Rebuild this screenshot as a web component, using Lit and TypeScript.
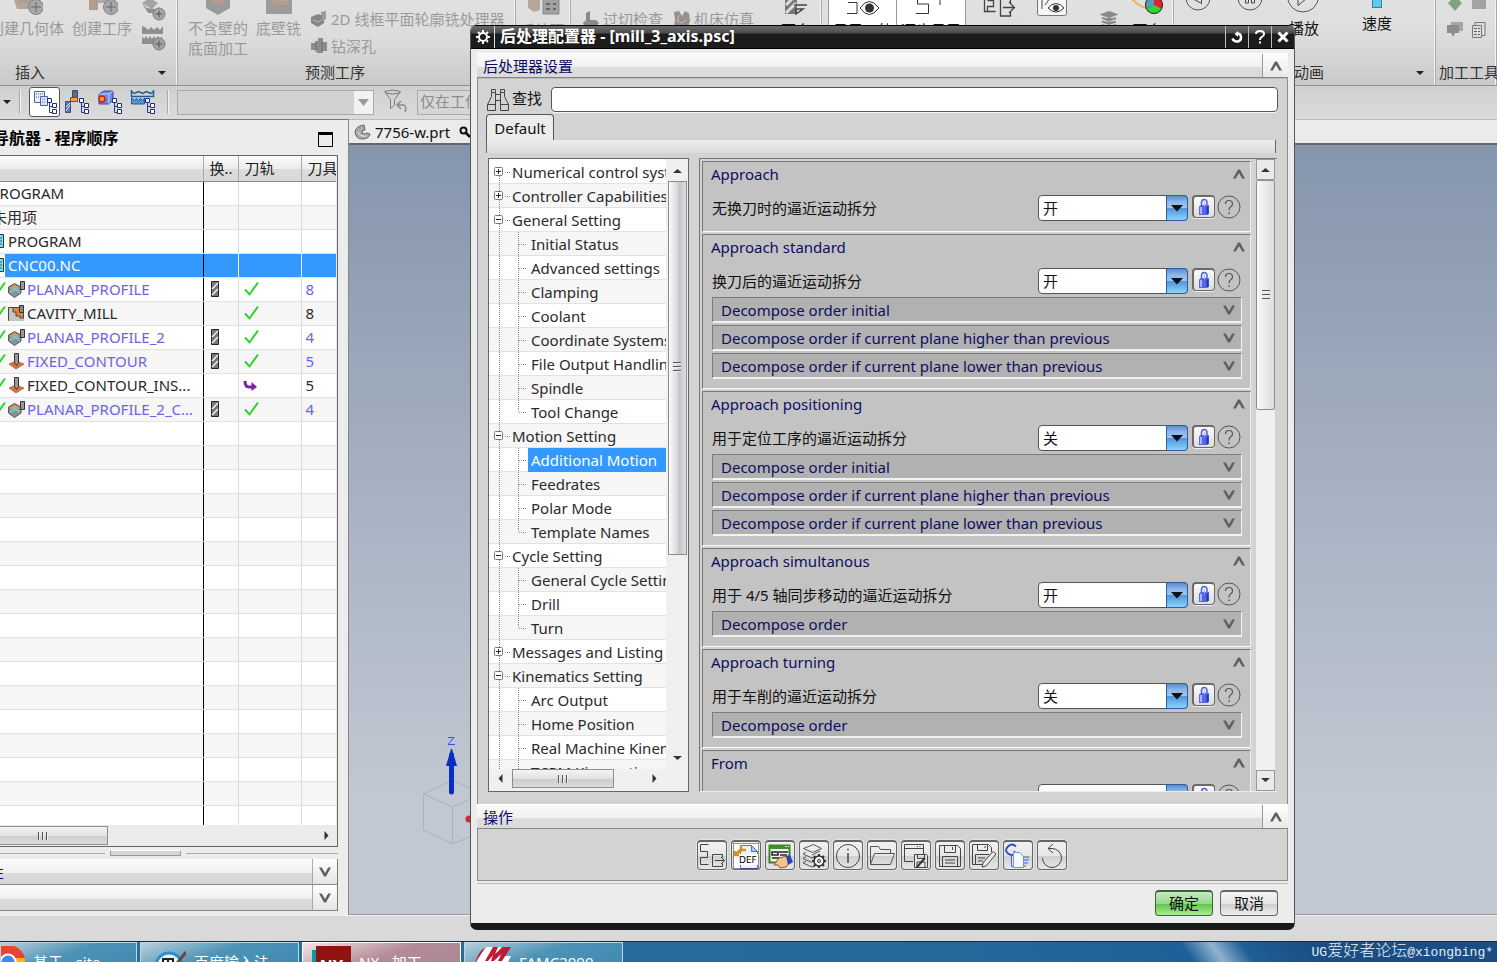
import { LitElement, html, svg, css, nothing } from "lit";
import { customElement } from "lit/decorators.js";
import { classMap } from "lit/directives/class-map.js";

/* ---------- icons ---------- */
const icon = (w: number, h: number, body: unknown, cls = "") =>
  html`<svg class=${cls} width=${w} height=${h} viewBox="0 0 ${w} ${h}" fill="none" aria-hidden="true">${body}</svg>`;

const chevUp = () => icon(12, 10, svg`<path d="M0 9.5 5 .5h2l5 9H9.200L6 4 2.800 9.500z" fill="#606060"/>`);
const chevDown = () => icon(12, 10, svg`<path d="M0 .5 5 9.500h2l5-9H9.200L6 6 2.800.5z" fill="#606060"/>`);
const caret = () => icon(8, 4, svg`<path d="M0 0h8L4 4z" fill="#222"/>`);
const tri = (dir: string) => {
  const d: Record<string, string> = {
    up: "M1 8 5.500 4 10 8z",
    down: "M1 3h9L5.500 7z",
    left: "M7.500 1v9L3.500 5.500z",
    right: "M3.500 1v9l4-4.500z",
  };
  return icon(11, 11, svg`<path d=${d[dir]} fill="#333"/>`);
};

const plusBadge = svg`<circle cx="25" cy="24" r="7.500" fill="#a8a8a8" stroke="#808080"/><path d="M25 19v10M20 24h10" stroke="#666"/>`;
const geomIcon = () => icon(32, 32, svg`<path d="M2 14h18l4 6-8 6H6z" fill="#b9a596"/><path d="M4 8h16v12H8z" fill="#a9a09a"/>${plusBadge}`);
const operIcon = () => icon(32, 32, svg`<path d="M3 10h9v17H3z" fill="#b29c8b"/><path d="M12 12h10v8H12z" fill="#aaa"/>${plusBadge}`);
const smallPlus = () => icon(26, 26, svg`<path d="M2 8l8-5 8 5-6 6z" fill="#a3a3a3"/><path d="M2 8l5 5 8 1v4H8z" fill="#909090"/><circle cx="19" cy="19" r="6" fill="#a8a8a8" stroke="#777"/><path d="M19 15.500v7M15.500 19h7" stroke="#555"/>`);
const methodPlus = () => icon(26, 26, svg`<path d="M2 1v8h21V1l-3 4-3-3-3 3-3-3-3 3-3-3z" fill="#8f8f8f"/><path d="M2 11v8h20v-8l-2 3-2-3-2 3-2-3-2 3-2-3-2 3-2-3-2 3z" fill="#8f8f8f"/><circle cx="19" cy="19" r="6" fill="#a2a2a2" stroke="#777"/><path d="M19 15.500v7M15.500 19h7" stroke="#555"/>`);
const floorIcon = () => icon(32, 32, svg`<path d="M4 10l12-5 12 5v15l-12 7-12-7z" fill="#9a9a9a"/><path d="M4 10l12 6 12-6v4l-12 6-12-6z" fill="#8fa8ab"/><path d="M8 18l8 4 8-4-8-5z" fill="#b59c8e"/>`);
const wallIcon = () => icon(32, 32, svg`<path d="M3 4h26v27H3z" fill="#9c9c9c"/><path d="M9 4h17v18H9z" fill="#b99b8c"/><path d="M12 4h14v14H12z" fill="#a8a8a8"/>`);
const profileIcon = () => icon(18, 18, svg`<path d="M1 7l7-3 6 2v7l-6 4-7-4z" fill="#858585"/><path d="M11 2l5-1v8l-4 2z" fill="#9b9b9b"/><path d="M3 10l5 2 4-2" stroke="#b7b7b7"/>`);
const drillIcon = () => icon(18, 18, svg`<path d="M1 6h4V4h3V1h5v4h4v9h-4v2H7v-3H1z" fill="#8c8c8c"/><path d="M6 6v9M12 4v10" stroke="#6f6f6f"/>`);
const postIcon = () => icon(34, 32, svg`<path d="M2 8h12v19l-6 2-6-4z" fill="#b7a79a"/><path d="M17 12h16v19H17z" fill="#a1a1a1" stroke="#888"/><path d="M20 16h4M27 16h3M20 21h4M27 21h3M20 26h4M27 26h3" stroke="#666" stroke-width="2"/>`);
const gougeIcon = () => icon(18, 18, svg`<path d="M4 3l4-2v9h6l3 3-3 4H3l-2-4 3-3z" fill="#8d8888"/><path d="M4 11l5 3" stroke="#b58c80"/>`);
const machineIcon = () => icon(18, 18, svg`<path d="M1 2l5-1 3 5 3-5 4 2 1 8-2 6-5-2-4 1-5 1 1-7z" fill="#97908c"/><path d="M6 5l-2 6 5 2 4-3" stroke="#c9beb8"/>`);
const endMillIcon = () => icon(24, 32, svg`<path d="M1 5h12v26H1z" fill="#777"/><path d="M2 30l10-10M2 22l10-10" stroke="#ddd" stroke-width="3"/><path d="M10 22h13M12 26h7l-7 5z" stroke="#444" stroke-width="1.500"/>`);
const pathEye = () => icon(34, 32, svg`<path d="M1 13h3M2 19.500h9v11M1 30.500h10" stroke="#333"/><path d="M14 25q9-13 19 0-10 13-19 0z" fill="#fff" stroke="#333"/><circle cx="23.500" cy="25" r="4.500" fill="#333"/>`);
const pathStep = () => icon(34, 32, svg`<path d="M14 12H3.500v9h11v9.500H2M26 17v5" stroke="#333"/>`);
const pathOut = () => icon(34, 34, svg`<path d="M14 8H2.500v20.500h11M5.500 17.500h6v6h-6v5h8M18.500 20v-4h10v4M18.500 16v17h10v-5M21 24.500h11M27 19l5.500 5.500L27 30" stroke="#444" stroke-width="1.300"/>`);
const checkEye = () => icon(30, 34, svg`<rect x=".5" y="1.500" width="29" height="31" rx="2" fill="#f6f6f6" stroke="#777"/><path d="M5 26V12l8-3M8 22l8-11M12 17l8-7" stroke="#444"/><path d="M11 25q8-9 16 0-8 8-16 0z" fill="#fff" stroke="#333"/><circle cx="19" cy="25" r="3" fill="#333"/>`);
const stackIcon = () => icon(18, 18, svg`<path d="M9 2l7 2.500-7 2.500-7-2.500zM2 8l7 2.500L16 8M2 11.500l7 2.500 7-2.500M2 15l7 2.500 7-2.500" fill="#8b8b8b" stroke="#8b8b8b" stroke-width="2"/>`);
const wheelIcon = () => icon(34, 32, svg`<path d="M1 16q8 8 14 9" stroke="#e9b64b" stroke-width="2"/><circle cx="23" cy="22" r="9" fill="#e3202c"/><path d="M23 22V13a9 9 0 0 0-8 13z" fill="#47a4b5"/><path d="M23 22l-8 4a9 9 0 0 0 16 0z" fill="#2fd43a"/><circle cx="23" cy="22" r="8.500" stroke="#333"/>`);
const playback = (kind: string) => icon(34, 36, svg`
  ${kind === "play"
    ? svg`<circle cx="16" cy="16.500" r="15.500" stroke="#555"/><path d="M11 9l11 7.500-11 9z" stroke="#444"/>`
    : svg`<circle cx="15" cy="18" r="12" stroke="#555"/>`}
  ${kind === "back" ? svg`<path d="M18.500 12l-9 6.500 9 5z" stroke="#444"/>` : nothing}
  ${kind === "pause" ? svg`<path d="M10.500 13h3v10h-3zM16.500 13h3v10h-3z" stroke="#444"/>` : nothing}`);
const diamondIcon = () => icon(18, 18, svg`<path d="M9 2l7 7-7 8-7-8z" fill="#7fa285"/>`);
const greyBox = () => icon(18, 18, svg`<path d="M2 3h14v12H2z" fill="#a3a3a3"/>`);
const greyChat = () => icon(18, 18, svg`<path d="M5 1h12v9H5z" fill="#a5a5a5"/><path d="M1 4h12v8H9l-2 4-2-4H1z" fill="#8c8c8c"/>`);
const sheetIcon = () => icon(18, 18, svg`<path d="M5 4V1.500h10v13h-3M2.500 4.500h9v12h-9z" stroke="#777" fill="#ddd"/><path d="M4 7.500h3M8 7.500h2M4 10.500h3M8 10.500h2M4 13.500h3M8 13.500h2" stroke="#666"/>`);

const treeMark = svg`<path d="M17.500 12v11.500H22M17.500 17.500H22" stroke="#2e3d8f"/><path d="M15.500 9.500h4v4h-4zM20.500 14.500h4v4h-4zM20.500 20.500h4v4h-4z" fill="#fff" stroke="#1c2d86"/>`;
const viewProgram = () => icon(26, 26, svg`<path d="M2.500 2.500h10v11h-10z" fill="#eaf0fb" stroke="#4b63a8"/><path d="M8.500 7.500h7v9h-7z" fill="#dbe5f6" stroke="#4b63a8"/><path d="M4 5h7M4 8h4M10 10h4M10 13h4" stroke="#4b63a8" stroke-dasharray="1 1"/>${treeMark}`);
const viewTool = () => icon(26, 26, svg`<path d="M8.500 1.500h5v9h-5z" fill="#5d6b8e" stroke="#3c486b"/><path d="M6.500 8.500h7v4h-7z" fill="#f0a23c" stroke="#8a4b17"/><path d="M1.500 12.500h5v11h-5z" fill="#5b78b8" stroke="#3b4e80"/><path d="M2 22l4-6M2 18l4-4" stroke="#e6ecf8"/>${treeMark}`);
const viewGeom = () => icon(26, 26, svg`<path d="M2 5l5-3h9v9l-4 4H2z" fill="#6c8be8" stroke="#3048a8"/><path d="M2 5h10v10M12 5l4-3" stroke="#c6d4fb"/><circle cx="5" cy="10" r="3" fill="#f0a028" stroke="#d01d1d" stroke-width="1.500"/>${treeMark}`);
const viewMethod = () => icon(26, 26, svg`<path d="M1.500 1v6.500h22V1M1.500 2.500l3 2 4-2 4 2 4-2 4 2 3-2" stroke="#1f5c95" stroke-width="1.500"/><path d="M1.500 9v6h13V9l-2 3-2-3-2 3-2-3-2 3-2-3z" fill="#4b9ad0" stroke="#1f5c95"/>${treeMark}`);
const funnelIcon = () => icon(26, 26, svg`<path d="M1.500 2.500q8-3 16 0l-6 8v6l-4 3v-9zM2 4q7 2 15 0" stroke="#7c7c7c"/><path d="M18 12l-4 4 4 4M14 16h7q3 2 1 7" stroke="#8a8a8a" stroke-width="1.500"/>`);
const partIcon = () => icon(18, 18, svg`<path d="M1 9q1-6 9-7l1 5q-3 0-3 3 2 2 5 0l3 1q-1 5-8 5-6 0-7-7z" fill="#a9a9a9" stroke="#666"/><path d="M4 9q2 5 8 4" stroke="#eee"/>`);
const keyIcon = () => icon(12, 12, svg`<circle cx="4.500" cy="4.500" r="3" stroke="#111" stroke-width="2"/><path d="M7 7l4 4" stroke="#111" stroke-width="2.500"/>`);

const okMark = () => icon(18, 16, svg`<path d="M2 8.500l4.500 5L15 1.500" stroke="#2cd42c" stroke-width="2"/>`);
const reuseMark = () => icon(18, 16, svg`<path d="M2 4q0 6 4 6h3" stroke="#7d22a8" stroke-width="3"/><path d="M8.500 5l5.500 5-5.500 4z" fill="#7d22a8"/>`);
const toolMark = () => icon(10, 16, svg`<path d="M1.500.5h7v15h-7z" fill="#777" stroke="#222"/><path d="M2 8l6-6M2 14l6-6" stroke="#eee" stroke-width="1.500"/>`);
const programMark = () => icon(16, 14, svg`<path d="M2.500.5h12v13h-12z" fill="#7fdcea" stroke="#333"/><path d="M5 4h8M5 7h8M5 10h8" stroke="#1d6c7c"/>`);
const opIcon = (k: string) =>
  k === "planar"
    ? icon(17, 17, svg`<path d="M.5 6l6-3.500 6.500 3.500v6L6.500 16.500.5 12z" fill="#8f8f8f" stroke="#555"/><path d="M1 7l6-3 5 3-5 2z" fill="#dc9a54"/><path d="M2 10l5-3 5 3v2L7 9.500 2 12z" fill="#58d0e4"/><path d="M12.500.5h4v8h-4z" fill="#999" stroke="#333"/>`)
    : k === "cavity"
      ? icon(17, 17, svg`<path d="M.5 2.500h15v13H.5z" fill="#e8852c" stroke="#444"/><path d="M1 3h4v4h3v4h4v2h4v3H1z" fill="#c4c4c4"/><path d="M5 3v4h3v4h4v2h4" stroke="#444"/><path d="M11.500.5h4v7h-4z" fill="#888" stroke="#333"/>`)
      : icon(17, 17, svg`<path d="M1 11l7-3 8 3-8 5z" fill="#d9743a" stroke="#9b4a1d" stroke-width=".6"/><path d="M6.500.5h4v9l-2 3-2-3z" fill="#9a9a9a" stroke="#333"/>`);

const gear = () => icon(14, 14, svg`<circle cx="7" cy="7" r="4" stroke="#fff" stroke-width="2"/><path d="M7 0v2M7 12v2M0 7h2M12 7h2M2 2l1.500 1.500M10.500 10.500L12 12M12 2l-1.500 1.500M3.500 10.500L2 12" stroke="#fff" stroke-width="2"/>`);
const resetMark = () => icon(14, 14, svg`<path d="M2.500 8.500q1.500 3.500 5 3 3.500-.5 3.500-4 0-4-4-4" stroke="#fff" stroke-width="2.500"/><path d="M8 1v6L4.500 4z" fill="#fff"/>`);
const helpMark = () => icon(14, 14, svg`<path d="M3 4q0-3 4-3t4 3q0 2-2.500 3.200Q7 8 7 10" stroke="#fff" stroke-width="2"/><path d="M6 11.500h2v2H6z" fill="#fff"/>`);
const closeMark = () => icon(14, 14, svg`<path d="M2.500 2.500l9 9M11.500 2.500l-9 9" stroke="#fff" stroke-width="3"/>`);
const binoculars = () => icon(24, 24, svg`<path d="M5.500 1.500h4v3h-4zM14.500 1.500h4v3h-4zM5.500 4.500v4l-4 8v6h8v-18M14.500 4.500v18h8v-6l-4-8v-4M9.500 6.500h5M9.500 12.500h5M1.500 16.500h8M14.500 16.500h8" stroke="#444"/>`);
const lock = () => icon(16, 18, svg`<path d="M5.500 9V5q0-3.500 2.800-3.500T11 5v4" stroke="#4c5fd8" stroke-width="1.500"/><path d="M3 8.500l2-1.500h8v8.500L11.500 17H3z" fill="#5668e0"/><path d="M5 9v7" stroke="#a9b5f8" stroke-width="2"/><path d="M8.500 3.500v5" stroke="#aab4f5"/><path d="M11.500 8.500v7.500" stroke="#2434bb" stroke-width="2"/>`);
const helpCircle = () => icon(24, 24, svg`<circle cx="12" cy="12" r="11" stroke="#555"/><path d="M8.500 9q0-3.500 3.500-3.500T15.500 9q0 1.800-2 3-1.500 1-1.500 3.500" stroke="#555" stroke-width="1.200"/><path d="M11.300 17.500h1.500V19h-1.500z" fill="#555"/>`);

const actionIcons: [string, () => unknown][] = [
  ["输出", () => svg`<path d="M10.500 2.500h-8v7h7v6h-7v7h8M14.500 24.500v-12h10v3M14.500 24.500h10v-3M17 18.500h9M23 15l3.500 3.500-3.500 3.500" stroke="#444"/>`],
  ["DEF", () => svg`<rect x="1" y="1" width="26" height="26" fill="#fff"/><path d="M8.500 3.500h11l6 6v17h-17z" fill="#eef2fd" stroke="#5468d8"/><path d="M19.500 3.500v6h6z" fill="#b6c4f4" stroke="#5468d8"/><path d="M3 13l7-6" stroke="#d8921c" stroke-width="3"/><path d="M9 3v5h5M3 9v4h4" stroke="#d8921c" stroke-width="2.500"/><rect x="7" y="12" width="19" height="11" fill="#fff"/><text x="7" y="21" font-family="DejaVu Sans" font-size="9" fill="#000">DEF</text><rect x="1.500" y="1.500" width="25" height="25" stroke="#222" stroke-dasharray="1 1"/>`],
  ["编辑", () => svg`<rect x="3.500" y="3.500" width="20" height="17" fill="#f4f4f4" stroke="#3a8220" stroke-width="2"/><path d="M3 3h21v4H3z" fill="#3f8f22"/><path d="M19 4.500h2M22 4.500h1" stroke="#fff"/><path d="M6 10h6v3H6zM13 10h9M6 16h8M14 13h7" stroke="#222" stroke-width="1.500"/><path d="M8 23l5-7 8-2 4 5-5 6-6 1-2-3z" fill="#f6c48a" stroke="#8f5f28"/><path d="M20 14l4-1 3 7-5 3z" fill="#2443c4"/>`],
  ["图层设置", () => svg`<path d="M3.500 6.500l10-4 8 4-9 4zM6 10l-3 2 9 4 3-1M12 13l8-4M6 14.500l-3 2 9 4M6 19l-3 2 9 4 3-1" stroke="#555"/><circle cx="19" cy="19" r="5" fill="#f2f2f2" stroke="#333" stroke-width="1.500"/><path d="M19 12v2M19 24v2M12 19h2M24 19h2M14 14l1.500 1.500M22.500 22.500L24 24M24 14l-1.500 1.500M14 24l1.500-1.500" stroke="#333" stroke-width="2"/><circle cx="19" cy="19" r="1.500" stroke="#333"/>`],
  ["信息", () => svg`<circle cx="14" cy="14" r="11.500" stroke="#444"/><path d="M14 11v10M13.200 7.500h1.600" stroke="#444" stroke-width="1.500"/>`],
  ["打开", () => svg`<path d="M2.500 22.500v-18h8l2 3h10v4M2.500 22.500l4-11h20l-4 11z" stroke="#555"/>`],
  ["窗口保存", () => svg`<path d="M11 19.500H2.500v-17h19V12M2.500 6.500h19M15 4.500h1M17.500 4.500h1M20 4.500h0" stroke="#444"/><path d="M12.500 12.500h12l1 1v12h-13zM15.500 12.500v4h7v-4M15 25v-5h8v5" fill="#e8e8e8" stroke="#444"/><path d="M15 25l8-9" stroke="#333" stroke-width="2"/>`],
  ["保存", () => svg`<path d="M3.500 3.500h18l3 3v18h-21zM8.500 3.500v7h11v-7M6.500 24.500v-10h15v10M9 18h10M9 21h10M16.500 5v3" stroke="#444"/>`],
  ["另存为", () => svg`<path d="M12 22.500H2.500v-20h16l3 3V10M7.500 2.500v6h10v-6M5.500 22V12.500H19M8 16h7M8 19h5M15 4v2" stroke="#444"/><path d="M12 25l1-4L23 9.500l3 2.500-10 12z" fill="#ececec" stroke="#444"/>`],
  ["复制", () => svg`<path d="M12 4.500q-4-4-8 0t0 7 7 0" stroke="#2f50c4" stroke-width="2"/><path d="M9 13l4-1-3-4z" fill="#2f50c4"/><path d="M7.500 13.500h5v11h-5z" fill="#dfe8fc" stroke="#4a66cc"/><path d="M9.500 10.500h6l4 4v11h-10z" fill="#f4f7ff" stroke="#7b92e2"/><path d="M19 15h6M20 18h5M20 21h4M20 24h2" stroke="#3a66c8"/>`],
  ["重置", () => svg`<path d="M10.500 6.500H14a9.500 9.500 0 1 1-9.500 9.500" stroke="#444"/><path d="M15 2l-5 4.500 5 4.500" stroke="#444"/>`],
];

/* ---------- data ---------- */
type Op = { name: string; kind: string; lvl: number; used?: boolean; tool?: boolean; mark?: string; no?: string };
const rows: Op[] = [
  { name: "NC_PROGRAM", kind: "", lvl: 0 },
  { name: "未用项", kind: "", lvl: 1 },
  { name: "PROGRAM", kind: "prog", lvl: 2 },
  { name: "CNC00.NC", kind: "sel", lvl: 2 },
  { name: "PLANAR_PROFILE", kind: "planar", lvl: 3, used: true, tool: true, mark: "ok", no: "8" },
  { name: "CAVITY_MILL", kind: "cavity", lvl: 3, mark: "ok", no: "8" },
  { name: "PLANAR_PROFILE_2", kind: "planar", lvl: 3, used: true, tool: true, mark: "ok", no: "4" },
  { name: "FIXED_CONTOUR", kind: "fixed", lvl: 3, used: true, tool: true, mark: "ok", no: "5" },
  { name: "FIXED_CONTOUR_INS...", kind: "fixed", lvl: 3, mark: "re", no: "5" },
  { name: "PLANAR_PROFILE_2_C...", kind: "planar", lvl: 3, used: true, tool: true, mark: "ok", no: "4" },
  ...Array.from({ length: 17 }, () => ({ name: "", kind: "", lvl: 0 })),
];

const tree: [string, string[] | null][] = [
  ["Numerical control system", null],
  ["Controller Capabilities", null],
  ["General Setting", ["Initial Status", "Advanced settings", "Clamping", "Coolant", "Coordinate Systems", "File Output Handling", "Spindle", "Tool Change"]],
  ["Motion Setting", ["Additional Motion", "Feedrates", "Polar Mode", "Template Names"]],
  ["Cycle Setting", ["General Cycle Setting", "Drill", "Turn"]],
  ["Messages and Listing", null],
  ["Kinematics Setting", ["Arc Output", "Home Position", "Real Machine Kinematics", "TCPM Kinematics"]],
];

const three = ["Decompose order initial", "Decompose order if current plane higher than previous", "Decompose order if current plane lower than previous"];
const groups: [string, string, string, string[]][] = [
  ["Approach", "无换刀时的逼近运动拆分", "开", []],
  ["Approach standard", "换刀后的逼近运动拆分", "开", three],
  ["Approach positioning", "用于定位工序的逼近运动拆分", "关", three],
  ["Approach simultanous", "用于 4/5 轴同步移动的逼近运动拆分", "开", ["Decompose order"]],
  ["Approach turning", "用于车削的逼近运动拆分", "关", ["Decompose order"]],
  ["From", "", "", []],
];

const base = css`
  :host, * { box-sizing: border-box; }
  :host { font: 15px/20px "Noto Sans", "Noto Sans CJK SC", sans-serif; color: #2a2a2a; }
  button, input, select { font: inherit; color: inherit; margin: 0; padding: 0; border: 0; background: none; border-radius: 0; }
  svg { display: block; flex: none; }
`;

/* ---------- post-processor dialog ---------- */
@customElement("post-dialog")
export class PostDialog extends LitElement {
  static styles = [base, css`
    :host { display: flex; flex-direction: column; background: #ececec; border: 1px solid #555; border-top: 0; border-bottom: 7px solid #1a1a1a; border-radius: 6px 6px 7px 7px; overflow: hidden; }
    .title { flex: none; display: flex; align-items: center; height: 24px; color: #fff; border: 1px solid #000; border-width: 1px 0; background: linear-gradient(#6b6b6d, #4c4c4e 7px, #1c1c1c 8px); }
    .title h1 { flex: 1; margin: 0; padding: 0 0 2px 5px; font-size: 16px; line-height: 20px; font-weight: 700; }
    .title .gear { width: 24px; height: 22px; display: grid; place-items: center; border-right: 1px solid #ddd; }
    .title button { width: 23px; height: 22px; display: grid; place-items: center; border-left: 1px solid #bbb; }
    .body { flex: 1; min-height: 0; display: flex; flex-direction: column; padding: 4px 6px 6px 6px; }
    .bar { flex: none; display: flex; width: 100%; height: 25px; color: #0d0d60; text-align: left; border-top: 1px solid #fff; border-bottom: 1px solid #858585; background: linear-gradient(#fafafa, #f0f0f0 55%, #dedede 56%, #dadada); }
    .bar h2 { flex: 1; margin: 0; padding-left: 6px; font: inherit; line-height: 24px; }
    .bar button { width: 26px; display: grid; place-items: center; border-left: 1px solid #999; background: linear-gradient(#fff, #e8e8e8); }
    .pane { flex: 1; min-height: 0; display: flex; flex-direction: column; padding: 8px 9px 12px 8px; background: #d3d3d3; border: 1px solid #8c8c8c; border-top-color: #bbb; border-bottom: 0; }
    .find { flex: none; display: flex; align-items: center; height: 25px; gap: 2px; color: #111; }
    .find label { padding-bottom: 3px; }
    .find input { flex: 1; height: 25px; margin-left: 7px; padding: 0 4px; background: #fff; border: 1px solid #555; border-radius: 4px; box-shadow: 0 1px 0 #f5f5f5; }
    .tab { flex: none; align-self: flex-start; height: 26px; width: 68px; margin-top: 2px; background: #ececec; color: #111; border: 1px solid #555; border-bottom: 0; border-radius: 4px 4px 0 0; line-height: 24px; text-align: center; }
    .strip { flex: none; height: 13px; margin-right: 2px; border-left: 1px solid #666; border-right: 1px solid #666; background: linear-gradient(#ededed, #dcdcdc); }
    .cols { flex: 1; min-height: 0; display: flex; gap: 10px; padding: 5px 1px 0 2px; }
    .tree { flex: none; width: 201px; display: grid; grid-template: minmax(0, 1fr) 22px / minmax(0, 1fr) 22px; border: 1px solid #666; background: #f0f0f0; }
    .list { overflow: hidden; margin: 0; padding: 1px 0 0; list-style: none; background: #fff; }
    .list ul { margin: 0; padding: 0; list-style: none; }
    .node { display: flex; align-items: center; height: 24px; border-bottom: 1px solid #e2e2e2; white-space: nowrap; }
    .node.alt { background: #f6f6f6; }
    .guide { flex: none; }
    .name { line-height: 24px; }
    .deepname { padding-left: 3px; }
    .sel { flex: 1; background: #3399ff; color: #fff; }
    .vs { display: flex; flex-direction: column; align-items: center; background: #f0f0f0; }
    .vs button { display: grid; place-items: center; width: 19px; height: 22px; }
    .vs .track { flex: 1; width: 19px; }
    .thumb { display: grid; place-items: center; width: 19px; border: 1px solid #8e8e8e; background: linear-gradient(90deg, #fafafa, #ddd 45%, #c5c5cc 60%, #dcdce2); }
    .vs .t1 { height: 66%; }
    .vs .t2 { height: 39%; border-radius: 2px; background: linear-gradient(90deg, #f8f8f8, #ddd); }
    .grip { width: 8px; height: 11px; background: repeating-linear-gradient(#555 0 1px, #eee 1px 2px, transparent 2px 4px); }
    .grip.h { width: 11px; height: 8px; background: repeating-linear-gradient(90deg, #555 0 1px, #eee 1px 2px, transparent 2px 4px); }
    .hs { display: flex; grid-column: 1 / -1; align-items: flex-start; padding: 0 22px 0 0; }
    .hs button { width: 23px; height: 19px; display: grid; place-items: center; }
    .hs .thumb { width: 102px; height: 19px; background: linear-gradient(#f4f4f4, #e2e2e2 50%, #cdcdcd 52%, #dadada); }
    .hs .space { flex: 1; }
    .opts { flex: 1; min-width: 0; display: flex; gap: 5px; border-top: 1px solid #777; border-left: 1px solid #777; border-bottom: 1px solid #eee; padding: 0 2px 0 2px; }
    .groups { flex: 1; min-width: 0; overflow: hidden; display: flex; flex-direction: column; gap: 2px; padding-top: 2px; }
    .group { flex: none; padding: 0 8px 7px 8px; background: #c3c3c3; border: 1px solid #777; border-right-color: #f0f0f0; border-bottom-color: #fafafa; }
    .ghead { display: flex; align-items: center; justify-content: space-between; width: calc(100% + 3px); height: 26px; padding-bottom: 2px; color: #0d0d60; text-align: left; }
    .row { display: flex; align-items: flex-start; height: 36px; padding: 7px 1px 0 1px; color: #111; }
    .row label { flex: 1; line-height: 26px; }
    .pick { display: grid; width: 150px; height: 26px; margin-right: 4px; }
    .pick select { grid-area: 1 / 1; appearance: none; padding: 0 0 0 4px; background: #fff; border: 1px solid #555; border-radius: 4px; }
    .pick span { grid-area: 1 / 1; justify-self: end; display: grid; place-items: center; width: 22px; pointer-events: none; border: 1px solid #2d5f9f; border-radius: 0 4px 4px 0; background: linear-gradient(#5c8cca, #8db8e8 6px, #9cc6f0 50%, #4f97dc 52%, #8cd2fb); }
    .lock { width: 23px; height: 23px; display: grid; place-items: center; margin-right: 2px; border: 2px solid #6a6a6a; border-right-width: 1px; border-bottom-width: 1px; border-radius: 4px; background: linear-gradient(#fafafa, #ddd); box-shadow: 0 1px 0 #eee; }
    .help { width: 24px; height: 24px; }
    .sub { display: flex; align-items: center; justify-content: space-between; width: calc(100% - 1px); height: 26px; margin: 0 0 2px 1px; padding: 0 6px 0 8px; color: #0d0d60; text-align: left; background: #b1b1b1; border: 1px solid #7c7c7c; border-right-color: #f2f2f2; border-bottom: 2px solid #f2f2f2; }
    .vs.opt button { height: 21px; border: 1px solid #999; background: #eaeaea; }
    .actions { flex: none; display: flex; justify-content: center; gap: 4px; padding: 11px 2px 0 0; height: 52px; background: #d3d3d3; border: 1px solid #8c8c8c; border-top: 0; box-shadow: 0 2px 0 #ececec, 0 3px 0 #bbb; }
    .actions button { width: 30px; height: 30px; display: grid; place-items: center; border: 1px solid #666; border-top-width: 2px; border-radius: 4px; background: linear-gradient(#f2f2f2, #e6e6e6 50%, #cfcfcf 52%, #e8e8e8); box-shadow: 0 0 0 1px #e4e4e4; }
    .foot { flex: none; display: flex; justify-content: flex-end; gap: 7px; padding: 9px 10px 0 0; height: 36px; }
    .foot button { width: 58px; height: 26px; padding-bottom: 2px; color: #111; border: 1px solid #666; border-top-width: 2px; border-radius: 4px; background: linear-gradient(#f5f5f5, #e4e4e4 50%, #cdcdcd 52%, #eee); }
    .foot .ok { border-color: #35663a; background: linear-gradient(#c6ebc0, #97d68d 50%, #62c34f 52%, #a8ee8f); }
  `];

  private guide(parent: boolean, open: boolean, first: boolean, last: boolean) {
    const dot = "1 1";
    return parent
      ? icon(23, 24, svg`<path d="M10.500 ${first ? 12 : 0}V24M16 12.500h5" stroke="#888" stroke-dasharray=${dot}/><rect x="5.500" y="7.500" width="8" height="8" rx="1" fill="#fff" stroke="#777"/><path d="M7 11.500h5${open ? "" : "M9.500 9v5"}" stroke="#222"/>`, "guide")
      : icon(39, 24, svg`<path d="M10.500 0V24M29.500 0V${last ? 12 : 24}M30 12.500h8" stroke="#888" stroke-dasharray=${dot}/>`, "guide");
  }

  render() {
    let n = 0;
    const node = (name: string, parent: boolean, open: boolean, last: boolean) => {
      const i = n++;
      return html`<div class=${classMap({ node: true, alt: i % 2 === 1 })}>
        ${this.guide(parent, open, i === 0, last)}
        <span class=${classMap({ name: true, deepname: !parent, sel: name === "Additional Motion" })}>${name}</span></div>`;
    };
    return html`
      <div class="title"><span class="gear">${gear()}</span><h1>后处理配置器 - [mill_3_axis.psc]</h1>
        <button aria-label="重置">${resetMark()}</button><button aria-label="帮助">${helpMark()}</button><button aria-label="关闭">${closeMark()}</button></div>
      <div class="body">
        <div class="bar"><h2>后处理器设置</h2><button aria-label="折叠">${chevUp()}</button></div>
        <div class="pane">
          <div class="find">${binoculars()}<label for="q">查找</label><input id="q" type="text" /></div>
          <button class="tab">Default</button>
          <div class="strip"></div>
          <div class="cols">
            <div class="tree">
              <ul class="list">${tree.map(([name, kids]) => html`<li>${node(name, true, !!kids, false)}
                ${kids ? html`<ul>${kids.map((k, j) => html`<li>${node(k, false, false, j === kids.length - 1 && name !== "Kinematics Setting")}</li>`)}</ul>` : nothing}</li>`)}</ul>
              <div class="vs"><button aria-label="向上">${tri("up")}</button>
                <div class="track"><div class="thumb t1"><span class="grip"></span></div></div>
                <button aria-label="向下">${tri("down")}</button></div>
              <div class="hs"><button aria-label="向左">${tri("left")}</button><div class="thumb"><span class="grip h"></span></div><span class="space"></span><button aria-label="向右">${tri("right")}</button></div>
            </div>
            <div class="opts">
              <div class="groups">${groups.map(([title, label, value, subs], i) => html`
                <section class="group">
                  <button class="ghead"><span>${title}</span>${chevUp()}</button>
                  <div class="row"><label for="s${i}">${label}</label>
                    <div class="pick"><select id="s${i}">${value ? nothing : html`<option selected></option>`}<option ?selected=${value === "开"}>开</option><option ?selected=${value === "关"}>关</option></select>
                      <span>${icon(12, 8, svg`<path d="M0 1h12L6 7.500z" fill="#111"/>`)}</span></div>
                    <button class="lock" aria-label="锁定">${lock()}</button><button class="help" aria-label="说明">${helpCircle()}</button></div>
                  ${subs.map((s) => html`<button class="sub"><span>${s}</span>${chevDown()}</button>`)}
                </section>`)}</div>
              <div class="vs opt"><button aria-label="向上">${tri("up")}</button>
                <div class="track"><div class="thumb t2"><span class="grip"></span></div></div>
                <button aria-label="向下">${tri("down")}</button></div>
            </div>
          </div>
        </div>
        <div class="bar"><h2>操作</h2><button aria-label="折叠">${chevUp()}</button></div>
        <div class="actions">${actionIcons.map(([name, body]) => html`<button aria-label=${name}>${icon(28, 28, body())}</button>`)}</div>
        <div class="foot"><button class="ok">确定</button><button>取消</button></div>
      </div>`;
  }
}

/* ---------- operation navigator ---------- */
@customElement("op-navigator")
export class OpNavigator extends LitElement {
  static styles = [base, css`
    :host { display: flex; flex-direction: column; background: #ececec; padding: 0 10px 4px 0; border-right: 1px solid #888; border-top: 1px solid #777; }
    .head { flex: none; display: flex; align-items: center; justify-content: space-between; height: 35px; padding: 3px 5px 0 11px; color: #000; }
    .head h2 { margin: 0; padding-bottom: 2px; font-size: 16px; font-weight: 700; }
    .grid { flex: 1; min-height: 0; display: flex; flex-direction: column; border: 1px solid #666; }
    .scroll { flex: 1; min-height: 0; overflow: hidden; margin-right: 1px; background: #fff; }
    table { width: 100%; border-collapse: collapse; table-layout: fixed; }
    th { height: 25px; padding: 0 0 0 6px; text-align: left; font-weight: 400; color: #222; white-space: nowrap; overflow: hidden; border-right: 1px solid #aaa; border-bottom: 1px solid #888; background: linear-gradient(#fafafa, #ededed 50%, #dcdcdc 52%, #d8d8d8); }
    td { height: 24px; padding: 0 0 0 4px; white-space: nowrap; overflow: hidden; border-right: 1px solid #ddd; border-bottom: 1px solid #e2e2e2; }
    th:last-child, td:last-child { border-right: 0; }
    td:first-child { border-right: 1px solid #000; padding-left: 0; }
    tr:nth-child(even) td { background: #f6f6f6; }
    .c1 { width: 252px; } .c2 { width: 35px; } .c3 { width: 63px; }
    .cell { display: flex; align-items: center; height: 23px; }
    .mark { padding-left: 2px; }
    .l0 { padding-left: 9px; } .l1 { padding-left: 38px; } .l2 { padding-left: 38px; } .l3 { padding-left: 39px; }
    .txt { padding: 0 3px; line-height: 23px; }
    .l3 .txt { padding-left: 2px; }
    .used td { color: #6a64e6; }
    tr.sel td, tr.sel:nth-child(even) td { background: #3399ff; color: #fff; border-right-color: #e8f2ff; }
    tr.sel td:first-child, tr.sel:nth-child(even) td:first-child { border-right-color: #000; background: linear-gradient(90deg, #fff 54px, #3399ff 54px); }
    .hs { flex: none; display: flex; align-items: center; height: 21px; padding-left: 27px; background: #ebebeb; }
    .thumb { display: grid; place-items: center; width: 130px; height: 19px; border: 1px solid #8e8e8e; background: linear-gradient(#f4f4f4, #e2e2e2 50%, #cdcdcd 52%, #dadada); }
    .grip { width: 11px; height: 8px; background: repeating-linear-gradient(90deg, #555 0 1px, #eee 1px 2px, transparent 2px 4px); }
    .hs button { margin-left: auto; width: 22px; display: grid; place-items: center; }
    .split { flex: none; display: grid; grid-template-columns: 155px 71px 1fr; gap: 5px; height: 12px; align-items: center; }
    .split i { height: 1px; background: #aaa; }
    .split b { height: 6px; background: #d6d6d6; border: 1px solid #999; border-top-color: #fff; }
    .acc { flex: none; display: flex; align-items: center; justify-content: space-between; height: 26px; padding-left: 9px; color: #0d0d60; border-right: 1px solid #777; border-bottom: 1px solid #888; background: linear-gradient(#fbfbfb, #f0f0f0 55%, #dcdcdc 56%, #d6d6d6); }
    .acc span:last-child { display: grid; place-items: center; width: 25px; height: 25px; border-left: 1px solid #aaa; background: linear-gradient(#fff, #e4e4e4); }
  `];
  render() {
    return html`
      <div class="head"><h2>工序导航器 - 程序顺序</h2>${icon(15, 15, svg`<path d="M.5 1.500h14v13H.5z" stroke="#000"/><path d="M0 1.500h15" stroke="#000" stroke-width="3"/>`)}</div>
      <div class="grid"><div class="scroll"><table>
        <thead><tr><th class="c1"></th><th class="c2">换..</th><th class="c3">刀轨</th><th>刀具</th></tr></thead>
        <tbody>${rows.map((r) => html`<tr class=${classMap({ sel: r.kind === "sel", used: !!r.used })}>
          <td><div class="cell l${r.lvl}">${r.lvl === 2 ? programMark() : nothing}${r.lvl === 3 ? html`${okMark()}${opIcon(r.kind)}` : nothing}<span class="txt">${r.name}</span></div></td>
          <td>${r.tool ? html`<div class="cell mark">${toolMark()}</div>` : nothing}</td>
          <td>${r.mark ? html`<div class="cell">${r.mark === "ok" ? okMark() : reuseMark()}</div>` : nothing}</td>
          <td>${r.no ?? nothing}</td></tr>`)}</tbody>
      </table></div>
      <div class="hs"><div class="thumb"><span class="grip"></span></div><button aria-label="向右">${tri("right")}</button></div></div>
      <div class="split"><i></i><b></b><i></i></div>
      <button class="acc"><span>相依性</span><span>${chevDown()}</span></button>
      <button class="acc"><span>细节</span><span>${chevDown()}</span></button>`;
  }
}

/* ---------- application frame ---------- */
@customElement("app-root")
export class AppRoot extends LitElement {
  static styles = [base, css`
    :host { position: relative; display: flex; flex-direction: column; height: 100vh; overflow: hidden; background: #d9d9d9; }
    .ribbon { flex: none; display: flex; height: 106px; margin-top: -20px; overflow: hidden; color: #111; background: linear-gradient(#e4e4e4, #dcdcdc 55%, #c9c9c9); border-bottom: 1px solid #909090; }
    .rg { flex: none; display: flex; flex-direction: column; margin-right: 1px; border-right: 1px solid #f4f4f4; box-shadow: 1px 0 0 #aaa; }
    .rg.last { flex: 1; min-width: 0; }
    .rb { flex: 1; min-height: 0; display: flex; align-items: flex-start; }
    .rt { flex: none; display: flex; align-items: center; height: 25px; }
    .rt span { flex: 1; color: #333; white-space: nowrap; padding-bottom: 1px; }
    .rt span.mid { text-align: center; padding-right: 28px; }
    .rt svg { margin-right: 10px; }
    .big { display: flex; flex-direction: column; align-items: center; padding: 3px 4px 0; gap: 3px; white-space: nowrap; text-align: center; }
    .off { color: #9a9a9a; }
    .on { background: #fff; outline: 1px solid #999; height: 80px; }
    .small { display: flex; flex-direction: column; padding: 0 5px; }
    .small button { display: flex; align-items: center; gap: 3px; height: 27px; white-space: nowrap; }
    .small button:first-child { height: 25px; }
    .g1 { width: 177px; } .g1 .rb { margin-left: -15px; } .g1 .rt { padding-left: 15px; }
    .g1 .small button { height: 30px; } .g1 .small { padding: 13px 0 0 4px; }
    .g2 { width: 337px; padding-left: 6px; } .g3 { width: 54px; } .g4 { width: 250px; padding-left: 6px; }
    .g3 .rb, .g5 .rb { justify-content: center; }
    .g3 .big, .g4 .big, .g5 .big { gap: 5px; }
    .g4 .big { padding-left: 22px; }
    .g5 { width: 351px; padding-left: 7px; } .g5 .rb { justify-content: flex-start; }
    .g5 .big { width: 68px; }
    .g5 .check { width: 38px; } .g5 .small { padding-left: 29px; } .g5 .more { width: 54px; }
    .g6 { width: 261px; } .g6 .rt { padding-left: 120px; }
    .g6 .big { padding: 0 8px; width: 52px; gap: 2px; }
    .speed { flex: 1; display: grid; justify-items: center; gap: 5px; padding: 17px 10px 0 0; }
    .speed i { justify-self: stretch; height: 3px; background: #fff; }
    .speed b { width: 10px; height: 9px; margin-top: -6px; background: #58cdf2; border: 1px solid #3a7fa0; }
    .last .small { flex-direction: row; flex-wrap: wrap; gap: 0 6px; padding: 9px 0 0 10px; width: 60px; }
    .last .small button, .last .small button:first-child { height: 27px; }
    .last .rt { padding-left: 3px; }
    .tools { flex: none; display: flex; align-items: center; height: 33px; padding: 0 0 1px 3px; background: linear-gradient(#cfcfcf, #dcdcdc); }
    .tools button { width: 33px; height: 30px; display: grid; place-items: center; }
    .tools .pressed { width: 31px; background: #fff; border: 1px solid #555; border-radius: 3px; }
    .tools i { width: 2px; height: 24px; margin: 0 8px 0 8px; border-left: 1px solid #aaa; background: #f2f2f2; }
    .drop { display: flex; justify-content: flex-end; align-items: stretch; width: 197px; height: 25px; margin-right: 5px; border: 1px solid #aaa; background: #d2d2d2; }
    .drop span { width: 19px; display: grid; place-items: center; background: #f2f2f2; }
    .tools .scope { display: block; width: 140px; height: 25px; margin-left: 5px; padding: 0 2px 2px; color: #8c8c8c; border: 1px solid #aaa; background: #d6d6d6; text-align: left; white-space: nowrap; }
    .main { flex: 1; min-height: 0; display: flex; }
    op-navigator { flex: none; width: 399px; margin-left: -50px; }
    .view { flex: 1; min-width: 0; display: flex; flex-direction: column; }
    .tabs { flex: none; display: flex; height: 26px; background: #ebebeb; border-bottom: 2px solid #666; border-top: 1px solid #bbb; }
    .tabs button { display: flex; align-items: center; gap: 3px; padding-left: 5px; color: #111; }
    .tabs button svg:last-child { margin-left: 6px; }
    .canvas { flex: 1; position: relative; background: linear-gradient(#8595ad, #a3aebf 40%, #c1c8d3 85%); border-bottom: 1px solid #999; }
    .axis { position: absolute; left: 71px; bottom: 66px; }
    .status { flex: none; height: 26px; background: #d9d9d9; border-top: 1px solid #f2f2f2; }
    .taskbar { flex: none; display: flex; gap: 3px; height: 21px; overflow: hidden; border-top: 1px solid #1a2d40; background: linear-gradient(235deg, #1a4d83 0 12%, #1f5e96 17%, #8fb2d0 19%, #1f609a 21%, #256a9c 40%, #2a6e98); }
    .task { flex: none; display: flex; align-items: center; gap: 8px; width: 159px; height: 40px; color: #fff; border: 1px solid #bcd6e4; background: linear-gradient(160deg, #b8d0dc, #4d93b6 40%, #3a86ae); white-space: nowrap; }
    .task:first-child { width: 137px; } .task.cur { background: linear-gradient(160deg, #f2e6e8, #b38b96 45%, #a88790); border-color: #fff; }
    .mark { margin-left: auto; padding-right: 4px; line-height: 14px; font-family: "Liberation Mono", "Noto Sans CJK SC", monospace; font-size: 13px; color: #e6edf5; white-space: nowrap; }
    .mark span { font-size: 16px; font-family: "Noto Sans CJK SC", sans-serif; font-weight: 300; }
    post-dialog { position: absolute; inset: 25px 202px 32px 470px; }
  `];

  render() {
    return html`
      <header class="ribbon">
        <div class="rg g1"><div class="rb">
          <button class="big off">${geomIcon()}<span>创建几何体</span></button>
          <button class="big off">${operIcon()}<span>创建工序</span></button>
          <div class="small"><button aria-label="创建刀具">${smallPlus()}</button><button aria-label="创建方法">${methodPlus()}</button></div></div>
          <div class="rt"><span>插入</span>${caret()}</div></div>
        <div class="rg g2"><div class="rb">
          <button class="big off">${floorIcon()}<span>不含壁的<br />底面加工</span></button>
          <button class="big off">${wallIcon()}<span>底壁铣</span></button>
          <div class="small off"><button></button><button>${profileIcon()}2D 线框平面轮廓铣处理器</button><button>${drillIcon()}钻深孔</button></div></div>
          <div class="rt"><span class="mid">预测工序</span></div></div>
        <div class="rg g3"><div class="rb"><button class="big off">${postIcon()}<span>后处理</span></button></div></div>
        <div class="rg g4"><div class="rb">
          <div class="small off"><button></button><button>${gougeIcon()}过切检查</button></div>
          <div class="small off"><button></button><button>${machineIcon()}机床仿真</button></div>
          <button class="big">${endMillIcon()}<span>更多</span></button></div></div>
        <div class="rg g5"><div class="rb">
          <button class="big on">${pathEye()}<span>显示刀轨</span></button>
          <button class="big on">${pathStep()}<span>逐步显示</span></button>
          <button class="big">${pathOut()}<span>确认刀轨</span></button>
          <button class="big check" aria-label="显示检查">${checkEye()}</button>
          <div class="small"><button></button><button aria-label="图层">${stackIcon()}</button></div>
          <button class="big more">${wheelIcon()}<span>更多</span></button></div></div>
        <div class="rg g6"><div class="rb">
          <button class="big" aria-label="后退">${playback("back")}</button>
          <button class="big" aria-label="暂停">${playback("pause")}</button>
          <button class="big">${playback("play")}<span>播放</span></button>
          <div class="speed"><i></i><b></b><span>速度</span></div></div>
          <div class="rt"><span>动画</span>${caret()}</div></div>
        <div class="rg last"><div class="rb"><div class="small">
          <button aria-label="分析">${diamondIcon()}</button><button aria-label="截面">${greyBox()}</button>
          <button aria-label="注释">${greyChat()}</button><button aria-label="文档">${sheetIcon()}</button></div></div>
          <div class="rt"><span>加工工具</span></div></div>
      </header>
      <nav class="tools">
        ${caret()}<i></i>
        <button class="pressed" aria-label="程序顺序视图">${viewProgram()}</button><button aria-label="机床视图">${viewTool()}</button>
        <button aria-label="几何视图">${viewGeom()}</button><button aria-label="加工方法视图">${viewMethod()}</button><i></i>
        <div class="drop"><span>${icon(11, 7, svg`<path d="M0 0h11L5.500 7z" fill="#999"/>`)}</span></div>
        <button aria-label="重置过滤器">${funnelIcon()}</button>
        <button class="scope">仅在工作部件内</button>
      </nav>
      <div class="main">
        <op-navigator></op-navigator>
        <div class="view">
          <div class="tabs"><button>${partIcon()}<span>7756-w.prt</span>${keyIcon()}</button></div>
          <div class="canvas">${icon(60, 118, svg`
            <path d="M3.500 64l29-14 29 14v38l-29 12-29-14zM3.500 64l29 13 29-13M32.500 77v37" stroke="#aab0ba"/>
            <path d="M31.500 62V25" stroke="#0a2fc0" stroke-width="5" stroke-linecap="round"/><path d="M26 36l5-17h1l5 17z" fill="#0a2fc0"/>
            <path d="M28 7.500h6l-6 7h7" stroke="#3b50d0"/><circle cx="49" cy="89" r="3.500" fill="#cf2a2a"/>`, "axis")}</div>
        </div>
      </div>
      <div class="status"></div>
      <footer class="taskbar">
        <button class="task">${icon(24, 32, svg`<circle cx="7" cy="16" r="17" fill="#fbbc05"/><path d="M-10 10a18 18 0 0 1 34 2H7z" fill="#ea4335"/><circle cx="7" cy="16" r="7.500" fill="#4285f4" stroke="#fff" stroke-width="2"/>`)}<span>基于 - site</span></button>
        <button class="task">${icon(45, 32, svg`<circle cx="28" cy="20" r="13" fill="#e8f4fb" stroke="#2b8ed0" stroke-width="3"/><path d="M22 13h10v9H22zM27 13v9" stroke="#222" stroke-width="2"/><path d="M33 21L45 6" stroke="#6b4a3a" stroke-width="3"/>`)}<span>百度输入法</span></button>
        <button class="task cur">${icon(48, 40, svg`<path d="M9 8h8v32H9z" fill="#0d9a9a"/><path d="M13 4h35v36H13z" fill="#8f130e"/><text x="17" y="30" font-family="Liberation Sans" font-weight="700" font-size="17" fill="#fff">NX</text>`)}<span>NX - 加工</span></button>
        <button class="task">${icon(46, 34, svg`<path d="M8 30q4-20 14-28h14l-5 9h15l-4 8H20l-6 12z" fill="#fff"/><path d="M10 18q4-13 10-15M20 16l8-14h5l-3 7 8-7h8l-9 14h-4l4-8-8 8h-3l2-6-5 6z" fill="#c11a34"/>`)}<span>FAMC2000</span></button>
        <div class="mark">UG<span>爱好者论坛</span>@xiongbing*</div>
      </footer>
      <post-dialog></post-dialog>`;
  }
}
